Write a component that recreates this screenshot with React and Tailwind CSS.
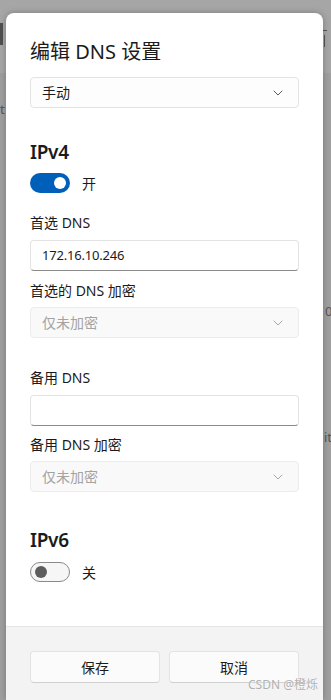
import React from 'react';

const font = { fontFamily: '"Noto Sans", "Noto Sans CJK SC", sans-serif' };

function Chevron({ color }) {
    return (
        <svg width="10" height="6" viewBox="0 0 10 6" fill="none">
            <path d="M1 1l4 4 4-4" stroke={color} strokeWidth="1" strokeLinecap="round" strokeLinejoin="round" />
        </svg>
    );
}

function Select({ value, disabled }) {
    return (
        <div
            className={`flex h-[31px] items-center justify-between rounded-[4px] border pl-[11px] pr-[15px] text-[14px] ${
                disabled
                    ? 'border-[#ececec] bg-[#f9f9f9] text-[#a3a3a3]'
                    : 'border-[#e3e3e3] bg-[#fdfdfd] text-[#1b1b1b]'
            }`}
        >
            <span>{value}</span>
            <Chevron color={disabled ? '#a8a8a8' : '#5c5c5c'} />
        </div>
    );
}

function Input({ value }) {
    return (
        <div className="flex h-[31px] items-center rounded-[4px] border border-[#e3e3e3] border-b-[#8a8a8a] bg-white pl-[11px] text-[13px] tracking-[-0.2px] text-[#1b1b1b]">
            {value}
        </div>
    );
}

function Toggle({ on, label }) {
    return (
        <div className="flex h-[20px] items-center gap-[12px]">
            {on ? (
                <div className="flex h-[20px] w-[40px] items-center justify-end rounded-full bg-[#005fb8] pr-[4px]">
                    <div className="h-[12px] w-[12px] rounded-full bg-white" />
                </div>
            ) : (
                <div className="flex h-[20px] w-[40px] items-center rounded-full border border-[#8a8a8a] bg-[#f6f6f6] pl-[4px]">
                    <div className="h-[12px] w-[12px] rounded-full bg-[#5d5d5d]" />
                </div>
            )}
            <span className="text-[14px] text-[#1b1b1b]">{label}</span>
        </div>
    );
}

function Label({ children, className = '' }) {
    return <div className={`h-[20px] text-[14px] leading-[20px] text-[#1b1b1b] ${className}`}>{children}</div>;
}

export default function App() {
    return (
        <div className="relative h-[700px] w-[331px] overflow-hidden bg-[#9f9f9f] pl-[6px] pt-[13px]" style={font}>
            {/* page behind the overlay */}
            <div className="absolute left-0 top-0 h-[73px] w-full bg-[#a6a6a6]" />
            <div className="absolute left-0 top-[23px] h-[22px] w-[3px] bg-[#4f4f4f]" />
            <div className="absolute left-0 top-[100px] text-[13px] text-[#555]">t</div>
            <div className="absolute right-[4px] top-[30px] h-[1px] w-[4px] bg-[#555]" />
            <div className="absolute right-[6px] top-[35px] h-[12px] w-[1px] bg-[#555]" />
            <div className="absolute left-[325px] top-[302px] text-[13px] text-[#555]">0</div>
            <div className="absolute left-[324px] top-[428px] text-[13px] text-[#555]">it</div>

            <div className="relative flex h-[687px] w-[317px] flex-col overflow-hidden rounded-t-[8px] bg-white shadow-[0_0_6px_rgba(0,0,0,0.25)]">
                <div className="flex flex-1 flex-col px-[24px] pt-[25px]">
                    <div className="h-[28px] text-[20px] leading-[28px] text-[#1b1b1b]">编辑 DNS 设置</div>
                    <div className="mt-[11px]">
                        <Select value="手动" />
                    </div>

                    <div className="mt-[30px] h-[28px] text-[19px] font-semibold leading-[28px] tracking-[-0.3px] text-[#1b1b1b]">IPv4</div>
                    <div className="mt-[7px]">
                        <Toggle on label="开" />
                    </div>

                    <Label className="mt-[20px]">首选 DNS</Label>
                    <div className="mt-[7px]">
                        <Input value="172.16.10.246" />
                    </div>
                    <Label className="mt-[10px]">首选的 DNS 加密</Label>
                    <div className="mt-[6px]">
                        <Select value="仅未加密" disabled />
                    </div>

                    <Label className="mt-[30px]">备用 DNS</Label>
                    <div className="mt-[7px]">
                        <Input value="" />
                    </div>
                    <Label className="mt-[9px]">备用 DNS 加密</Label>
                    <div className="mt-[6px]">
                        <Select value="仅未加密" disabled />
                    </div>

                    <div className="mt-[34px] h-[28px] text-[19px] font-semibold leading-[28px] tracking-[-0.3px] text-[#1b1b1b]">IPv6</div>
                    <div className="mt-[8px]">
                        <Toggle on={false} label="关" />
                    </div>
                </div>

                <div className="h-[74px] border-t border-[#e5e5e5] bg-[#f3f3f3] px-[24px] pt-[24px]">
                    <div className="grid grid-cols-2 gap-[9px]">
                        <button className="h-[32px] rounded-[4px] border border-[#e3e3e3] border-b-[#d0d0d0] bg-[#fbfbfb] text-[14px] text-[#1b1b1b]">
                            保存
                        </button>
                        <button className="h-[32px] rounded-[4px] border border-[#e3e3e3] border-b-[#d0d0d0] bg-[#fbfbfb] text-[14px] text-[#1b1b1b]">
                            取消
                        </button>
                    </div>
                </div>
            </div>

            <div className="absolute left-[248px] top-[677px] text-[12px] leading-[16px] text-[#b0b0b0] [text-shadow:0_0_2px_#fff]">
                CSDN @橙烁
            </div>
        </div>
    );
}
